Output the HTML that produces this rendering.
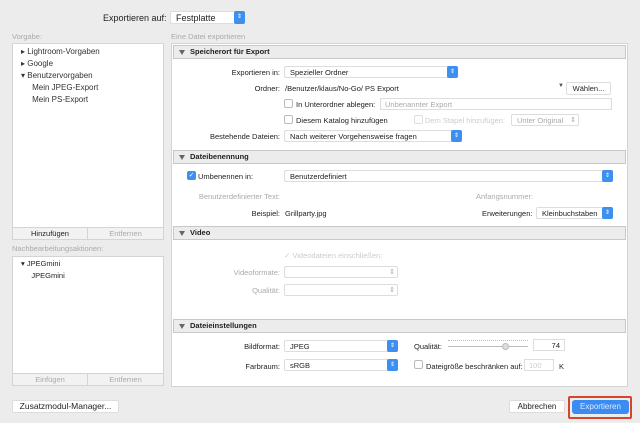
<!DOCTYPE html><html><head><meta charset="utf-8"><style>
*{margin:0;padding:0;box-sizing:border-box}
body{width:640px;height:423px;background:#ececec;font-family:"Liberation Sans",sans-serif;font-size:7.5px;color:#222;position:relative;overflow:hidden}
.a{position:absolute;white-space:nowrap}
.box{position:absolute;background:#fff;border:1px solid #d4d4d4}
.g{color:#aaa}
.r{text-align:right}
.sel{position:absolute;background:#fff;border:1px solid #ddd;border-radius:2px;height:12px;padding-left:5px;line-height:11px}
.st{position:absolute;right:-1px;top:-1px;width:11px;height:12px;background:#3d8ff0;border-radius:2px;color:#fff;font-size:6px;text-align:center;line-height:12px}
.sg{position:absolute;right:2px;top:0;color:#aaa;font-size:7px}
.hdr{position:absolute;left:173px;width:453px;height:14px;background:#ececec;border:1px solid #c8c8c8;font-weight:bold;padding-left:16px;line-height:12px}
.hdr:before{content:"";position:absolute;left:5px;top:4px;border-left:3px solid transparent;border-right:3px solid transparent;border-top:5px solid #666}
.cb{position:absolute;width:9px;height:9px;border:1px solid #bbb;border-radius:2px;background:#fff}
.btn{position:absolute;background:#fff;border:1px solid #ddd;border-radius:2px;text-align:center;line-height:11px;height:13px}
.fld{position:absolute;background:#fff;border:1px solid #ddd;height:12px;line-height:11px;padding:0 4px}
</style></head><body>
<div class="a" style="left:103px;top:13px;font-size:9px">Exportieren auf:</div>
<div class="sel" style="left:170px;top:11px;width:75px;height:13px;font-size:9px;line-height:12px">Festplatte<div class="st" style="height:13px">⇕</div></div>
<div class="a g" style="left:12px;top:32px">Vorgabe:</div>
<div class="a g" style="left:171px;top:32px">Eine Datei exportieren</div>

<div class="box" style="left:12px;top:43px;width:152px;height:185px">
<div class="a" style="left:8px;top:2px;line-height:12px;color:#333;font-size:8px">▸ Lightroom-Vorgaben<br>▸ Google<br>▾ Benutzervorgaben<br>&nbsp;&nbsp;&nbsp;&nbsp;&nbsp;Mein JPEG-Export<br>&nbsp;&nbsp;&nbsp;&nbsp;&nbsp;Mein PS-Export</div></div>
<div class="box" style="left:12px;top:227px;width:76px;height:13px;background:#f2f2f2;text-align:center;line-height:11px">Hinzufügen</div>
<div class="box g" style="left:87px;top:227px;width:77px;height:13px;background:#f2f2f2;text-align:center;line-height:11px">Entfernen</div>
<div class="a g" style="left:12px;top:244px">Nachbearbeitungsaktionen:</div>
<div class="box" style="left:12px;top:256px;width:152px;height:118px">
<div class="a" style="left:8px;top:1px;line-height:12px">▾ JPEGmini<br>&nbsp;&nbsp;&nbsp;&nbsp;&nbsp;JPEGmini</div></div>
<div class="box g" style="left:12px;top:373px;width:76px;height:13px;background:#f2f2f2;text-align:center;line-height:11px">Einfügen</div>
<div class="box g" style="left:87px;top:373px;width:77px;height:13px;background:#f2f2f2;text-align:center;line-height:11px">Entfernen</div>
<div class="btn" style="left:12px;top:400px;width:107px;font-size:8.5px">Zusatzmodul-Manager...</div>

<div class="box" style="left:171px;top:43px;width:457px;height:344px"></div>

<div class="hdr" style="top:45px">Speicherort für Export</div>
<div class="a r" style="left:200px;width:80px;top:68px">Exportieren in:</div>
<div class="sel" style="left:284px;top:66px;width:174px">Spezieller Ordner<div class="st">⇕</div></div>
<div class="a r" style="left:200px;width:80px;top:84px">Ordner:</div>
<div class="a" style="left:285px;top:84px">/Benutzer/klaus/No-Go/ PS Export</div>
<div class="a" style="left:558px;top:83px;font-size:6px;color:#555">▼</div>
<div class="btn" style="left:566px;top:82px;width:45px">Wählen...</div>
<div class="cb" style="left:284px;top:99px"></div><div class="a" style="left:296px;top:100px">In Unterordner ablegen:</div>
<div class="fld g" style="left:380px;top:98px;width:232px">Unbenannter Export</div>
<div class="cb" style="left:284px;top:115px"></div><div class="a" style="left:296px;top:116px">Diesem Katalog hinzufügen</div>
<div class="cb" style="left:414px;top:115px;border-color:#ddd"></div><div class="a g" style="left:425px;top:116px;color:#ccc">Dem Stapel hinzufügen:</div>
<div class="sel g" style="left:511px;top:114px;width:68px">Unter Original<div class="sg">⇕</div></div>
<div class="a r" style="left:180px;width:100px;top:132px">Bestehende Dateien:</div>
<div class="sel" style="left:284px;top:130px;width:178px">Nach weiterer Vorgehensweise fragen<div class="st">⇕</div></div>

<div class="hdr" style="top:150px">Dateibenennung</div>
<div class="cb" style="left:187px;top:171px;background:#3d8ff0;border-color:#3d8ff0;color:#fff;font-size:7px;line-height:7px;text-align:center">✓</div>
<div class="a" style="left:198px;top:172px">Umbenennen in:</div>
<div class="sel" style="left:284px;top:170px;width:329px">Benutzerdefiniert<div class="st">⇕</div></div>
<div class="a g r" style="left:180px;width:100px;top:192px">Benutzerdefinierter Text:</div>
<div class="a g" style="left:476px;top:192px">Anfangsnummer:</div>
<div class="a r" style="left:200px;width:80px;top:209px">Beispiel:</div>
<div class="a" style="left:285px;top:209px">Grillparty.jpg</div>
<div class="a" style="left:482px;top:209px">Erweiterungen:</div>
<div class="sel" style="left:536px;top:207px;width:77px">Kleinbuchstaben<div class="st">⇕</div></div>

<div class="hdr" style="top:226px">Video</div>
<div class="a" style="left:284px;top:251px;color:#ccc">✓ Videodateien einschließen:</div>
<div class="a g r" style="left:200px;width:80px;top:268px">Videoformate:</div>
<div class="sel" style="left:284px;top:266px;width:114px"><div class="sg">⇕</div></div>
<div class="a g r" style="left:200px;width:80px;top:286px">Qualität:</div>
<div class="sel" style="left:284px;top:284px;width:114px"><div class="sg">⇕</div></div>

<div class="hdr" style="top:319px">Dateieinstellungen</div>
<div class="a r" style="left:200px;width:80px;top:342px">Bildformat:</div>
<div class="sel" style="left:284px;top:340px;width:114px">JPEG<div class="st">⇕</div></div>
<div class="a r" style="left:200px;width:80px;top:362px">Farbraum:</div>
<div class="sel" style="left:284px;top:359px;width:114px">sRGB<div class="st">⇕</div></div>
<div class="a" style="left:414px;top:342px">Qualität:</div>
<div class="a" style="left:448px;top:346px;width:80px;height:1px;background:#bbb"></div>
<div class="a" style="left:448px;top:340px;width:80px;height:3px;border-top:1px dotted #bbb"></div>
<div class="a" style="left:502px;top:343px;width:7px;height:7px;border-radius:50%;background:#ddd;border:1px solid #bbb"></div>
<div class="fld r" style="left:533px;top:339px;width:32px">74</div>
<div class="cb" style="left:414px;top:360px"></div><div class="a" style="left:426px;top:362px">Dateigröße beschränken auf:</div>
<div class="fld" style="left:524px;top:359px;width:30px;color:#ccc">100</div>
<div class="a" style="left:559px;top:362px">K</div>

<div class="btn" style="left:509px;top:400px;width:56px;font-size:8px">Abbrechen</div>
<div class="a" style="left:568px;top:396px;width:64px;height:23px;border:2px solid #d9432c;border-radius:2px"></div>
<div class="a" style="left:572px;top:400px;width:57px;height:14px;background:#3b8cf2;border-radius:3px;color:#dbe9ff;text-align:center;line-height:14px;font-size:8px">Exportieren</div>
</body></html>
